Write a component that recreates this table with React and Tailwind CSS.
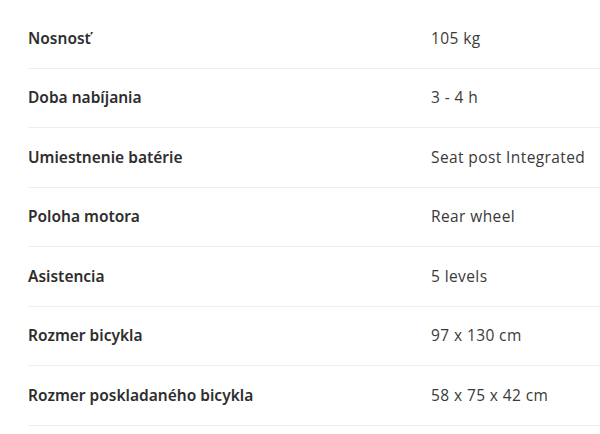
import React from 'react';

const specs = [
  { label: 'Nosnosť', value: '105 kg' },
  { label: 'Doba nabíjania', value: '3 - 4 h' },
  { label: 'Umiestnenie batérie', value: 'Seat post Integrated' },
  { label: 'Poloha motora', value: 'Rear wheel' },
  { label: 'Asistencia', value: '5 levels' },
  { label: 'Rozmer bicykla', value: '97 x 130 cm' },
  { label: 'Rozmer poskladaného bicykla', value: '58 x 75 x 42 cm' },
];

const App = () => {
  return (
    <div className="w-[600px] h-[434px] bg-white overflow-hidden pl-[28px] pt-[9px] text-[#333]">
      {specs.map((spec) => (
        <div
          key={spec.label}
          className="h-[59.5px] flex items-center border-b-[1.5px] border-[#eeeeee]"
        >
          <div className="w-[403px] text-[15.5px] font-semibold font-['Noto_Sans',sans-serif] text-[#2e2e2e]">{spec.label}</div>
          <div className="text-[15.5px] tracking-[0.4px] font-['Open_Sans',sans-serif] text-[#3a3a3a]">{spec.value}</div>
        </div>
      ))}
    </div>
  );
};

export default App;
